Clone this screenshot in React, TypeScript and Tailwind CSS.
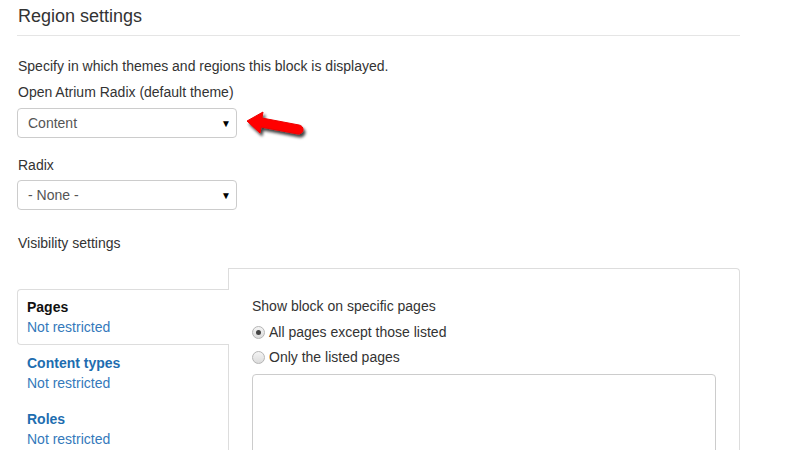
import React from "react";

const font = { fontFamily: '"Liberation Sans", Arial, sans-serif' };

function Select({ value }: { value: string }) {
  return (
    <div className="flex h-[30px] w-[220px] items-center justify-between rounded-[4px] border border-[#cccccc] bg-white pl-[10px] pr-[5px] text-[14px] text-[#555555]">
      <span>{value}</span>
      <span className="text-[10px] text-black">▼</span>
    </div>
  );
}

function Radio({ checked }: { checked?: boolean }) {
  return (
    <span className="flex h-[13px] w-[13px] items-center justify-center rounded-full border border-[#b5b5b5] bg-gradient-to-b from-[#f4f4f4] to-[#dcdcdc]">
      {checked && <span className="h-[5px] w-[5px] rounded-full bg-[#444444]" />}
    </span>
  );
}

function Arrow() {
  return (
    <svg
      className="absolute left-[242px] top-[103px]"
      width="72"
      height="42"
      viewBox="0 0 72 42"
    >
      <defs>
        <filter id="sh" x="-20%" y="-40%" width="150%" height="190%">
          <feDropShadow dx="2" dy="3" stdDeviation="1.6" floodColor="#000" floodOpacity="0.75" />
        </filter>
      </defs>
      <path
        d="M5 18 L21 9 L20 15 L57 22 A4.5 4.5 0 0 1 56 31 L19 24 L18 30 Z"
        fill="#ff0000"
        stroke="#ee0000"
        strokeWidth="1"
        strokeLinejoin="round"
        filter="url(#sh)"
      />
    </svg>
  );
}

function Tab({
  title,
  active,
}: {
  title: string;
  active?: boolean;
}) {
  return (
    <div
      className={
        active
          ? "relative z-10 -mr-px h-[56px] rounded-l-[4px] border border-r-0 border-[#dddddd] bg-white pl-[9px] pt-[7px]"
          : "h-[56px] pl-[10px] pt-[8px]"
      }
    >
      <div
        className={
          "text-[14px] font-bold leading-[20px] " +
          (active ? "text-[#111111]" : "text-[#1e6db0]")
        }
      >
        {title}
      </div>
      <div className="text-[14px] leading-[20px] text-[#3479bb]">Not restricted</div>
    </div>
  );
}

export default function App() {
  return (
    <div
      className="relative h-[450px] w-[800px] overflow-hidden bg-white text-[#333333]"
      style={font}
    >
      <div className="w-[740px] pl-[17px]">
        <h2 className="h-[36px] border-b border-[#e5e5e5] pl-px pt-[5px] text-[18px] leading-[22px]">
          Region settings
        </h2>
        <div className="pl-px pt-[20px] text-[14px] leading-[20px]">
          Specify in which themes and regions this block is displayed.
        </div>
        <div className="mt-[6px] pl-px text-[14px] leading-[20px]">
          Open Atrium Radix (default theme)
        </div>
        <div className="mt-[6px]">
          <Select value="Content" />
        </div>
        <div className="mt-[17px] pl-px text-[14px] leading-[20px]">Radix</div>
        <div className="mt-[5px]">
          <Select value="- None -" />
        </div>
        <div className="mt-[23px] pl-px text-[14px] leading-[20px]">
          Visibility settings
        </div>
        <div className="mt-[15px] flex items-start">
          <div className="mt-[21px] w-[211px] shrink-0">
            <Tab title="Pages" active />
            <Tab title="Content types" />
            <Tab title="Roles" />
          </div>
          <div className="h-[200px] flex-1 rounded-tr-[4px] border border-b-0 border-[#dddddd] px-[23px] pt-[27px]">
            <div className="text-[14px] leading-[20px]">Show block on specific pages</div>
            <div className="mt-[6px] flex h-[20px] items-center gap-[4px] text-[14px]">
              <Radio checked />
              <span>All pages except those listed</span>
            </div>
            <div className="mt-[5px] flex h-[20px] items-center gap-[4px] text-[14px]">
              <Radio />
              <span>Only the listed pages</span>
            </div>
            <div className="mt-[7px] h-[120px] w-[464px] rounded-[4px] border border-[#cccccc]" />
          </div>
        </div>
      </div>
      <Arrow />
    </div>
  );
}
